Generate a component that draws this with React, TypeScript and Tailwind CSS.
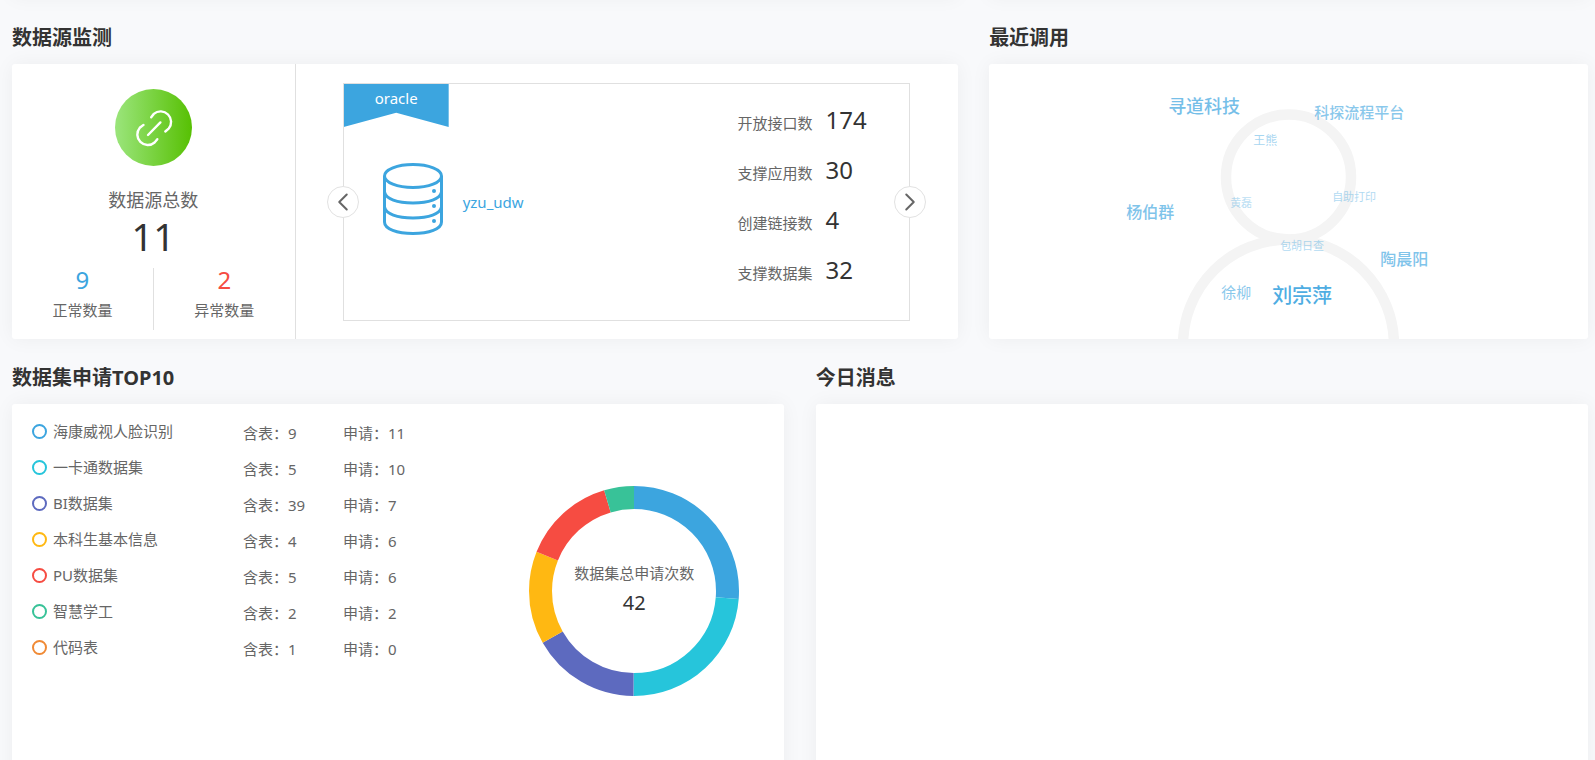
import React from 'react';
import { ChevronLeft, ChevronRight } from 'lucide-react';

const stats = [
    { label: '开放接口数', value: 174 },
    { label: '支撑应用数', value: 30 },
    { label: '创建链接数', value: 4 },
    { label: '支撑数据集', value: 32 },
];

const datasets = [
    { name: '海康威视人脸识别', tables: 9, applies: 11, border: 'border-[#3ca5df]', color: '#3ca5df' },
    { name: '一卡通数据集', tables: 5, applies: 10, border: 'border-[#26c5db]', color: '#26c5db' },
    { name: 'BI数据集', tables: 39, applies: 7, border: 'border-[#5d6abf]', color: '#5d6abf' },
    { name: '本科生基本信息', tables: 4, applies: 6, border: 'border-[#ffb812]', color: '#ffb812' },
    { name: 'PU数据集', tables: 5, applies: 6, border: 'border-[#f64c42]', color: '#f64c42' },
    { name: '智慧学工', tables: 2, applies: 2, border: 'border-[#38c298]', color: '#38c298' },
    { name: '代码表', tables: 1, applies: 0, border: 'border-[#f08a35]', color: '#f08a35' },
];

const words = [
    { text: '寻道科技', cls: 'left-[179px] top-[30px] text-[18px] font-medium opacity-70' },
    { text: '科探流程平台', cls: 'left-[325px] top-[36px] text-[15px] font-medium opacity-60' },
    { text: '王熊', cls: 'left-[264px] top-[65px] text-[12px] opacity-45' },
    { text: '自助打印', cls: 'left-[343px] top-[121px] text-[11px] opacity-40' },
    { text: '黄磊', cls: 'left-[241px] top-[127px] text-[11px] opacity-35' },
    { text: '杨伯群', cls: 'left-[137px] top-[136px] text-[16px] font-medium opacity-65' },
    { text: '包胡日查', cls: 'left-[291px] top-[170px] text-[11px] opacity-40' },
    { text: '陶晨阳', cls: 'left-[391px] top-[183px] text-[16px] font-medium opacity-65' },
    { text: '徐柳', cls: 'left-[232px] top-[216px] text-[15px] opacity-60' },
    { text: '刘宗萍', cls: 'left-[283px] top-[220px] text-[20px] font-medium opacity-90' },
];

const Section = ({ title, className, children }: { title: string; className: string; children?: React.ReactNode }) => (
    <section className={className}>
        <h2 className="h-[65px] pt-6 text-[20px] leading-[30px] font-bold text-[#333]">{title}</h2>
        {children}
    </section>
);

const LinkBadge = () => (
    <svg width="77" height="77" viewBox="0 0 77 77" fill="none">
        <defs>
            <linearGradient id="green" x1="0" x2="1" y1="0" y2="0">
                <stop offset="0" stopColor="#9be57c" />
                <stop offset="1" stopColor="#57c003" />
            </linearGradient>
        </defs>
        <circle cx="38.5" cy="38.5" r="38.5" fill="url(#green)" />
        <g stroke="#fff" strokeWidth="2.4" strokeLinecap="round">
            <path d="M36.2 28.2 L38.8 24.9 A10.5 10.5 0 0 1 53.6 39.7 L50.3 42.5" />
            <path d="M28.5 35.9 L24.8 38.7 A10.5 10.5 0 0 0 39.6 53.5 L42.3 50.2" />
            <path d="M33 46 L45.4 33.4" />
        </g>
    </svg>
);

const DatabaseIcon = () => (
    <svg width="60" height="72" viewBox="0 0 60 72" fill="none" stroke="#3ca5df" strokeWidth="3">
        <ellipse cx="30" cy="13" rx="28.5" ry="11.5" />
        <path d="M1.5 13 V59 C1.5 66 14 70.5 30 70.5 S58.5 66 58.5 59 V13" />
        <path d="M1.5 29 C3 36 14 40 30 40 S57 36 58.5 29" />
        <path d="M1.5 44 C3 51 14 55 30 55 S57 51 58.5 44" />
        <g fill="#3ca5df" stroke="none">
            <circle cx="51" cy="28" r="2" />
            <circle cx="51" cy="43" r="2" />
            <circle cx="51" cy="58" r="2" />
        </g>
    </svg>
);

const Donut = () => {
    const total = datasets.reduce((sum, d) => sum + d.applies, 0);
    const circumference = 2 * Math.PI * 93.5;
    let used = 0;

    return (
        <svg width="210" height="210" viewBox="0 0 210 210" fill="none">
            <g transform="rotate(-90 105 105)">
                {datasets.filter((d) => d.applies > 0).map((d) => {
                    const length = (d.applies / total) * circumference;
                    const offset = -used;
                    used += length;
                    return (
                        <circle
                            key={d.name}
                            cx="105"
                            cy="105"
                            r="93.5"
                            stroke={d.color}
                            strokeWidth="23"
                            strokeDasharray={`${length} ${circumference - length}`}
                            strokeDashoffset={offset}
                        />
                    );
                })}
            </g>
        </svg>
    );
};

const SourceTotals = () => (
    <div className="flex w-[30%] flex-col items-center border-r border-[#e0e0e0] pt-[25px]">
        <LinkBadge />
        <div className="mt-[22px] text-[18px] leading-6 text-[#666]">数据源总数</div>
        <div className="text-[38px] leading-[48px] text-[#333]">11</div>
        <div className="mt-2 flex h-[62px] w-full text-center text-[15px] leading-6 text-[#666]">
            <div className="flex-1">
                <div className="-mt-1 mb-[2px] text-[24px] leading-8 text-[#3ca5df]">9</div>
                <div>正常数量</div>
            </div>
            <div className="flex-1 border-l border-[#e0e0e0]">
                <div className="-mt-1 mb-[2px] text-[24px] leading-8 text-[#f64c42]">2</div>
                <div>异常数量</div>
            </div>
        </div>
    </div>
);

const arrowClass =
    'absolute top-1/2 flex size-8 -translate-y-1/2 items-center justify-center rounded-full border border-[#e2e2e2] bg-white text-[#666]';

const SourceCarousel = () => (
    <div className="flex-1 pt-[19px] pr-12 pb-[18px] pl-[47px]">
        <div className="relative flex h-full items-center justify-between border border-[#e0e0e0] pr-[43px] pl-[39px]">
            <div className="absolute top-0 left-0 h-[43px] w-[105px] bg-[#3ca5df] pt-[2px] text-center text-[15px] leading-6 text-white [clip-path:polygon(0_0,100%_0,100%_100%,50%_67%,0_100%)]">
                oracle
            </div>
            <div className="flex items-center gap-5 text-[15px] text-[#3ca5df]">
                <div className="pb-[6px]">
                    <DatabaseIcon />
                </div>
                <span>yzu_udw</span>
            </div>
            <dl className="mb-[15px]">
                {stats.map((s) => (
                    <div key={s.label} className="flex h-[50px] items-baseline gap-[13px]">
                        <dt className="text-[15px] text-[#666]">{s.label}</dt>
                        <dd className="w-10 text-[24px] leading-[50px] text-[#333]">{s.value}</dd>
                    </div>
                ))}
            </dl>
            <button type="button" aria-label="上一个" className={`${arrowClass} -left-[17px]`}>
                <ChevronLeft size={30} strokeWidth={1.6} />
            </button>
            <button type="button" aria-label="下一个" className={`${arrowClass} -right-[17px]`}>
                <ChevronRight size={30} strokeWidth={1.6} />
            </button>
        </div>
    </div>
);

const RecentCalls = () => (
    <div className="relative h-[275px] overflow-hidden rounded-[3px] bg-white shadow-[0_0_20px_rgba(0,0,0,0.05)]">
        <svg className="mx-auto block" width="240" height="275" viewBox="0 0 240 275" fill="none" stroke="#f4f4f4" strokeWidth="10.5">
            <circle cx="119.5" cy="113" r="62.5" />
            <circle cx="119.5" cy="281" r="105.5" />
        </svg>
        {words.map((w) => (
            <span key={w.text} className={`absolute leading-6 whitespace-nowrap text-[#3ca5df] ${w.cls}`}>
                {w.text}
            </span>
        ))}
    </div>
);

const DatasetTop = () => (
    <div className="flex h-[400px] justify-between rounded-[3px] bg-white shadow-[0_0_20px_rgba(0,0,0,0.05)]">
        <ul className="pt-[9px] pl-5 text-[15px] text-[#666]">
            {datasets.map((d) => (
                <li key={d.name} className="grid h-9 grid-cols-[211px_100px_100px] items-center">
                    <span className="flex items-center gap-[6px]">
                        <i className={`size-[15px] rounded-full border-2 ${d.border}`} />
                        {d.name}
                    </span>
                    <span className="pt-1">含表：{d.tables}</span>
                    <span className="pt-1">申请：{d.applies}</span>
                </li>
            ))}
        </ul>
        <div className="flex w-[300px] justify-center pt-[82px]">
            <div className="relative size-[210px]">
                <Donut />
                <div className="absolute inset-0 pt-[75px] text-center">
                    <div className="text-[15px] leading-6 text-[#666]">数据集总申请次数</div>
                    <div className="mt-1 text-[20px] leading-[28px] text-[#333]">42</div>
                </div>
            </div>
        </div>
    </div>
);

export default function App() {
    return (
        <div className="h-screen overflow-hidden bg-[#f8f9fb] pr-[7px] pl-3 font-['Noto_Sans','Noto_Sans_CJK_SC',sans-serif]">
            {/* bottom edge of the row scrolled out above */}
            <div className="-mt-[43px] mb-[2px] flex h-10 justify-between">
                <div className="w-[60%] rounded-[3px] bg-white shadow-[0_0_20px_rgba(0,0,0,0.05)]" />
                <div className="w-[38%] rounded-[3px] bg-white shadow-[0_0_20px_rgba(0,0,0,0.05)]" />
            </div>

            <div className="flex justify-between">
                <Section title="数据源监测" className="w-[60%]">
                    <div className="flex h-[275px] rounded-[3px] bg-white shadow-[0_0_20px_rgba(0,0,0,0.05)]">
                        <SourceTotals />
                        <SourceCarousel />
                    </div>
                </Section>
                <Section title="最近调用" className="w-[38%]">
                    <RecentCalls />
                </Section>
            </div>

            <div className="flex justify-between">
                <Section title="数据集申请TOP10" className="w-[49%]">
                    <DatasetTop />
                </Section>
                <Section title="今日消息" className="w-[49%]">
                    <div className="h-[400px] rounded-[3px] bg-white shadow-[0_0_20px_rgba(0,0,0,0.05)]" />
                </Section>
            </div>
        </div>
    );
}
